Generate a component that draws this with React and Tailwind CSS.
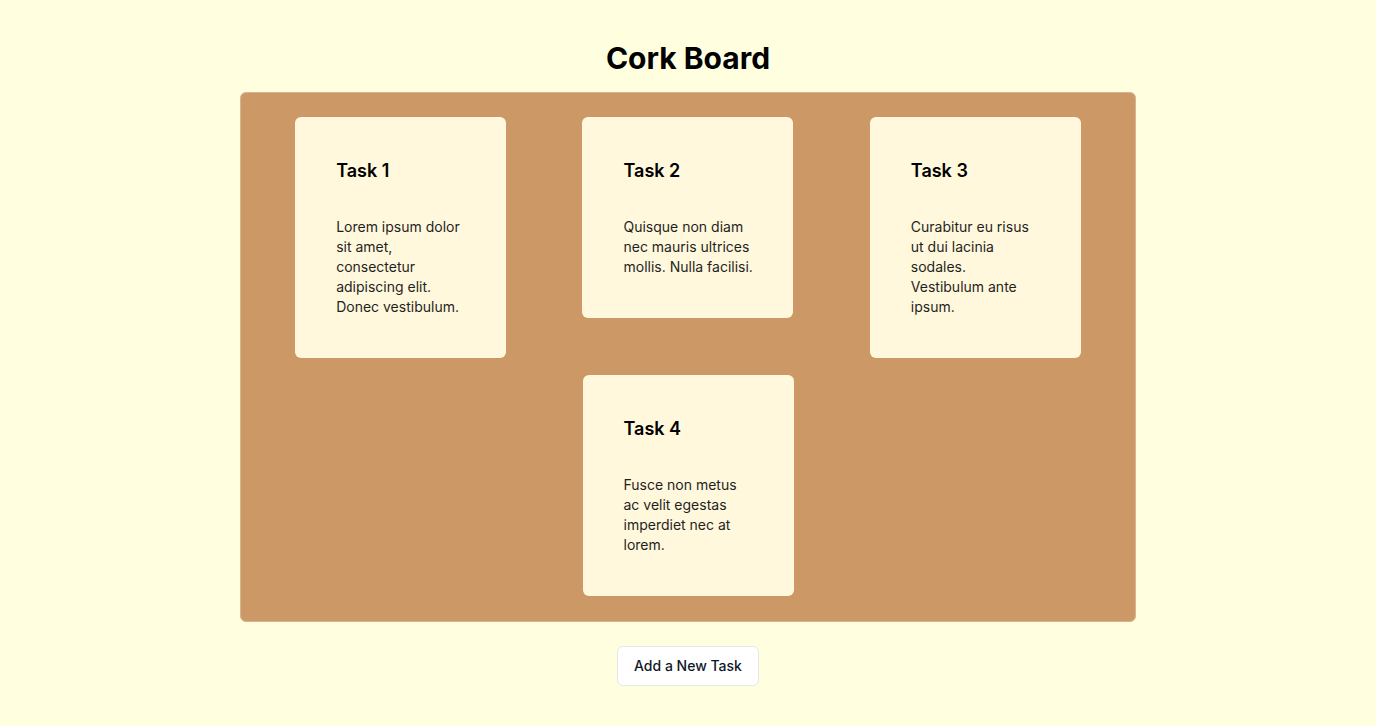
import React from 'react';

const tasks = [
  { id: 1, title: 'Task 1', body: 'Lorem ipsum dolor sit amet, consectetur adipiscing elit. Donec vestibulum.' },
  { id: 2, title: 'Task 2', body: 'Quisque non diam nec mauris ultrices mollis. Nulla facilisi.' },
  { id: 3, title: 'Task 3', body: 'Curabitur eu risus ut dui lacinia sodales. Vestibulum ante ipsum.' },
  { id: 4, title: 'Task 4', body: 'Fusce non metus ac velit egestas imperdiet nec at lorem.' },
];

function TaskCard({ title, body }) {
  return (
    <div className="w-[211px] bg-[#fff8dc] rounded-md pt-[40px] pb-[41px] pl-[41px] pr-[39px]">
      <h3 className="text-lg font-semibold text-black mb-8">{title}</h3>
      <p className="text-sm text-[#1f1f1f]">{body}</p>
    </div>
  );
}

export default function App() {
  return (
    <div
      className="min-h-screen bg-[#ffffe0] flex flex-col items-center pt-10"
      style={{ fontFamily: 'Inter, "Noto Sans", sans-serif' }}
    >
      <h1 className="text-3xl font-bold text-black mb-4">Cork Board</h1>
      <div className="w-[896px] bg-[#cc9966] rounded-md border border-[#d8b48f] px-6 pt-6 pb-[25px] flex flex-wrap justify-around items-start gap-x-4 gap-y-[17px]">
        {tasks.map((t) => (
          <TaskCard key={t.id} title={t.title} body={t.body} />
        ))}
      </div>
      <button className="mt-6 h-10 px-4 bg-white border border-gray-200 rounded-md text-sm font-medium text-[#111827]">
        Add a New Task
      </button>
    </div>
  );
}
